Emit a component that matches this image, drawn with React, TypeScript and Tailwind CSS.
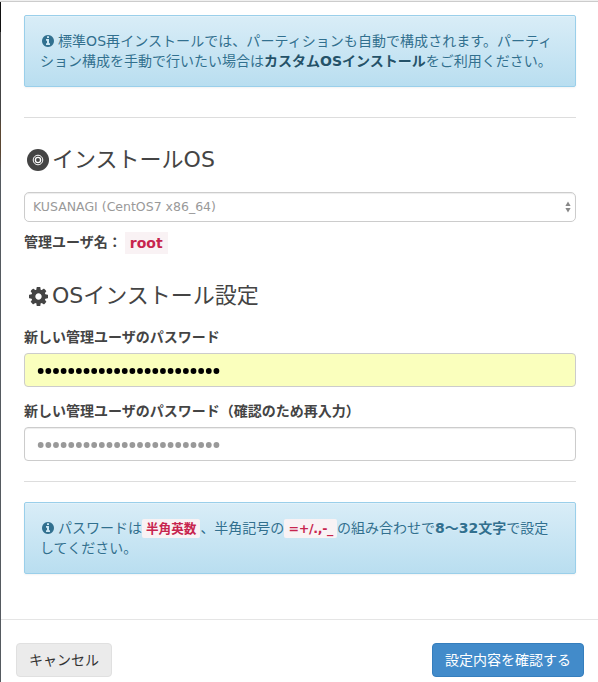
import type { ReactNode } from 'react';

function InfoIcon() {
    return (
        <svg viewBox="128 128 1536 1536" className="inline-block w-3 h-3 ml-[2px] mr-1 align-[-1px]" fill="currentColor">
            <path d="M1152 1376v-160q0-14-9-23t-23-9h-96v-512q0-14-9-23t-23-9h-320q-14 0-23 9t-9 23v160q0 14 9 23t23 9h96v320h-96q-14 0-23 9t-9 23v160q0 14 9 23t23 9h448q14 0 23-9t9-23zm-128-896v-160q0-14-9-23t-23-9h-192q-14 0-23 9t-9 23v160q0 14 9 23t23 9h192q14 0 23-9t9-23zm640 416q0 209-103 385.5t-279.5 279.5-385.5 103-385.5-103-279.5-279.5-103-385.5 103-385.5 279.5-279.5 385.5-103 385.5 103 279.5 279.5 103 385.5z" />
        </svg>
    );
}

function DiscIcon() {
    return (
        <svg viewBox="0 0 22 22" className="w-[22px] h-[22px]" fill="none">
            <circle cx="11" cy="11" r="11" fill="#444" />
            <circle cx="11" cy="11" r="4.8" stroke="#fff" strokeWidth="1" />
            <circle cx="11" cy="11" r="2.6" stroke="#fff" strokeWidth="1.3" />
        </svg>
    );
}

function CogIcon() {
    return (
        <svg viewBox="128 128 1536 1536" className="w-[19px] h-[19px]" fill="currentColor">
            <path d="M1152 896q0-106-75-181t-181-75-181 75-75 181 75 181 181 75 181-75 75-181zm512-109v222q0 12-8 23t-20 13l-185 28q-19 54-39 91 35 50 107 138 10 12 10 25t-9 23q-27 37-99 108t-94 71q-12 0-26-9l-138-108q-44 23-91 38-16 136-29 186-7 28-36 28h-222q-14 0-24.5-8.5t-11.5-21.5l-28-184q-49-16-90-37l-141 107q-10 9-25 9-14 0-25-11-126-114-165-168-7-10-7-23 0-12 8-23 15-21 51-66.5t54-70.5q-27-50-41-99l-183-27q-13-2-21-12.5t-8-23.5v-222q0-12 8-23t19-13l186-28q14-46 39-92-40-57-107-138-10-12-10-24 0-10 9-23 26-36 98.5-107.5t94.5-71.5q13 0 26 10l138 107q44-23 91-38 16-136 29-186 7-28 36-28h222q14 0 24.5 8.5t11.5 21.5l28 184q49 16 90 37l142-107q9-9 24-9 13 0 25 10 129 119 165 170 7 8 7 22 0 12-8 23-15 21-51 66.5t-54 70.5q26 50 41 98l183 28q13 2 21 12.5t8 23.5z" />
        </svg>
    );
}

function Alert({ children }: { children: ReactNode }) {
    return (
        <div className="h-[72px] rounded-[2px] border border-[#9acfea] bg-linear-to-b from-[#d9edf7] to-[#b9def0] px-[15px] pt-[15px] leading-5 whitespace-nowrap text-[#31708f] shadow-[inset_0_1px_0_rgba(255,255,255,0.25),0_1px_2px_rgba(0,0,0,0.05)] [text-shadow:0_1px_0_rgba(255,255,255,0.2)]">
            {children}
        </div>
    );
}

function Heading({ icon, children }: { icon: ReactNode; children: ReactNode }) {
    return (
        <h3 className="flex h-6 items-center text-[22px] leading-6 font-normal whitespace-nowrap">
            <span className="flex w-7 shrink-0 justify-center">{icon}</span>
            {children}
        </h3>
    );
}

function Code({ children }: { children: ReactNode }) {
    return (
        <code className="rounded-[2px] bg-[#f9f2f4] px-1 py-[2px] font-['DejaVu_Sans','Noto_Sans_CJK_JP',sans-serif] text-[12.6px] leading-4 font-bold text-[#c7254e]">
            {children}
        </code>
    );
}

function Dots({ className }: { className: string }) {
    return (
        <svg viewBox="0 0 184 8" className={`mt-[2px] h-2 w-[184px] ${className}`} fill="currentColor">
            {Array.from({ length: 24 }, (_, i) => (
                <circle key={i} cx={3.7 + i * 7.64} cy="4" r="2.9" />
            ))}
        </svg>
    );
}

export default function App() {
    return (
        <div className="flex h-[682px] w-[598px] flex-col overflow-hidden bg-white font-['DejaVu_Sans','Noto_Sans_CJK_JP',sans-serif] text-sm text-[#444]">
            <div className="h-[2px] shrink-0 border-b border-[#ccc] bg-[#f0f0f0]" />
            <div className="flex flex-1">
                <div className="w-px shrink-0 bg-[linear-gradient(#111_0_30px,#444_30px_115px,#5a4632_125px_150px,#555a60_170px)]" />
                <div className="flex min-w-0 flex-1 flex-col">
                    <div className="flex h-[617px] flex-col pt-[13px] pr-[22px] pl-[23px]">
                        <Alert>
                            <InfoIcon />
                            <span className="tracking-[0.05px]">標準OS再インストールでは、パーティションも自動で構成されます。パーティ</span>
                            <br />
                            ション構成を手動で行いたい場合は<b className="text-[#245269]">カスタムOSインストール</b>をご利用ください。
                        </Alert>
                        <hr className="mt-[30px] border-[#ddd]" />

                        <div className="mt-[30px]">
                            <Heading icon={<DiscIcon />}>インストールOS</Heading>
                        </div>
                        <div className="mt-5 flex h-[30px] items-center justify-between rounded-[5px] border border-[#ccc] pr-1 pl-2 text-[12.5px] text-[#999] shadow-[inset_0_1px_1px_rgba(0,0,0,0.075)]">
                            KUSANAGI (CentOS7 x86_64)
                            <svg viewBox="0 0 6 12" className="h-3 w-[6px]" fill="#888">
                                <path d="M3 0.5L5.6 5H0.4zM3 11.5L5.6 7H0.4z" />
                            </svg>
                        </div>
                        <div className="mt-[10px] flex h-[22px] items-center">
                            <b className="-mt-[2px]">管理ユーザ名：</b>
                            <span className="ml-[3px] flex h-[22px] items-center bg-[#f9f2f4] px-[5px] font-bold text-[#c7254e]">root</span>
                        </div>

                        <div className="mt-[30px]">
                            <Heading icon={<CogIcon />}>OSインストール設定</Heading>
                        </div>
                        <label className="mt-[19px] h-5 leading-5 font-bold">新しい管理ユーザのパスワード</label>
                        <div className="mt-[6px] flex h-[34px] items-center rounded-[4px] border border-[#ccc] bg-[#faffbd] px-3">
                            <Dots className="text-black" />
                        </div>
                        <label className="mt-[14px] h-5 leading-5 font-bold">新しい管理ユーザのパスワード（確認のため再入力）</label>
                        <div className="mt-[6px] flex h-[34px] items-center rounded-[4px] border border-[#ccc] px-3 shadow-[inset_0_1px_1px_rgba(0,0,0,0.075)]">
                            <Dots className="text-[#999]" />
                        </div>
                        <hr className="mt-5 mb-5 border-[#ddd]" />

                        <Alert>
                            <InfoIcon />
                            パスワードは<Code>半角英数</Code>、半角記号の<Code><span className="-tracking-[0.3px]">=+/.,-_</span></Code>の組み合わせで<b>8〜32文字</b>で設定
                            <br />
                            してください。
                        </Alert>
                    </div>
                    <div className="flex flex-1 items-start justify-between border-t border-[#e5e5e5] pt-[23px] pr-[14px] pl-[15px]">
                        <button className="h-[34px] w-24 rounded-[4px] border border-[#e0e0e0] bg-[#ebebeb] pb-px text-[#333]">キャンセル</button>
                        <button className="h-[34px] w-[152px] rounded-[4px] border border-[#357ebd] bg-[#428bca] pb-px whitespace-nowrap text-white">設定内容を確認する</button>
                    </div>
                </div>
            </div>
        </div>
    );
}
